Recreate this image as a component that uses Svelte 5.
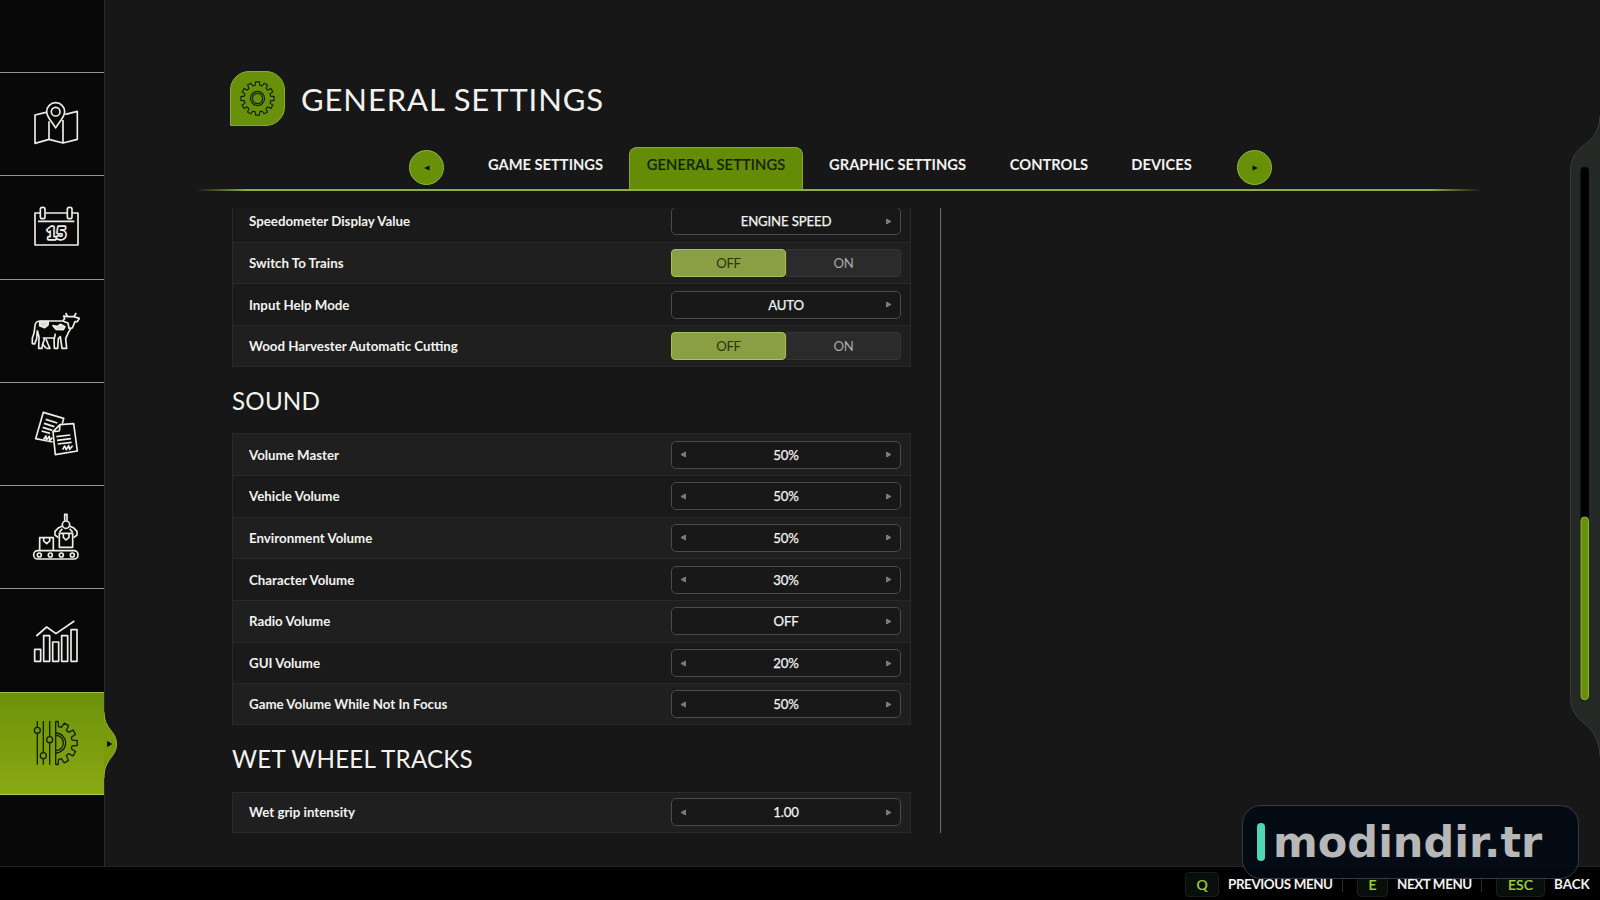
<script>
  const menu = ["map", "calendar", "animals", "contracts", "production", "statistics", "settings"];
  const views = {
    map: "96 120 144 144",
    calendar: "96 430 144 144",
    animals: "96 95 144 144",
    contracts: "96 405 144 144",
    production: "96 100 144 144",
    statistics: "96 409 144 144",
    settings: "96 119 144 144"
  };

  const tabs = [
    { name: "GAME SETTINGS", width: 167 },
    { name: "GENERAL SETTINGS", width: 174, active: true },
    { name: "GRAPHIC SETTINGS", width: 189 },
    { name: "CONTROLS", width: 114 },
    { name: "DEVICES", width: 111 }
  ];

  const sections = [
    {
      rows: [
        { label: "Speedometer Display Value", value: "ENGINE SPEED", first: true },
        { label: "Switch To Trains", toggle: true },
        { label: "Input Help Mode", value: "AUTO", first: true },
        { label: "Wood Harvester Automatic Cutting", toggle: true }
      ]
    },
    {
      title: "SOUND",
      rows: [
        { label: "Volume Master", value: "50%" },
        { label: "Vehicle Volume", value: "50%" },
        { label: "Environment Volume", value: "50%" },
        { label: "Character Volume", value: "30%" },
        { label: "Radio Volume", value: "OFF", first: true },
        { label: "GUI Volume", value: "20%" },
        { label: "Game Volume While Not In Focus", value: "50%" }
      ]
    },
    {
      title: "WET WHEEL TRACKS",
      rows: [{ label: "Wet grip intensity", value: "1.00" }]
    }
  ];

  const keys = [
    { key: "Q", action: "PREVIOUS MENU", keyWidth: 34, width: 115 },
    { key: "E", action: "NEXT MENU", keyWidth: 31, width: 85 },
    { key: "ESC", action: "BACK", keyWidth: 49, width: 38 }
  ];

  // outline of a cog with 12 teeth
  function cog(cx, cy, outer, inner) {
    const steps = [[-10, inner], [-6.5, outer], [6.5, outer], [10, inner]];
    let d = "";
    for (let i = 0; i < 12; i++) {
      for (const [offset, r] of steps) {
        const a = ((i * 30 + offset) * Math.PI) / 180;
        d += (d ? "L" : "M") + (cx + r * Math.sin(a)).toFixed(1) + " " + (cy - r * Math.cos(a)).toFixed(1);
      }
    }
    return d + "Z";
  }
</script>

<div class="screen">
  <div class="main">
    <nav>
      {#each menu as item}
        <div class="item" class:active={item === "settings"}>
          <svg class="icon" viewBox={views[item]}>
            {#if item === "map"}
              <path d="M138 157L105 165V250L147 238L189 249L232 238V154L196 163M147 184V238M189 180V249" />
              <path d="M167 204C160 190 140 172 140 155A27 27 0 0 1 194 155C194 172 174 190 167 204Z" />
              <circle cx="167" cy="155" r="13" />
            {:else if item === "calendar"}
              <path d="M121 460H105V556H234V460H217M136 460H202M114 485H223" />
              <rect x="121" y="443" width="14" height="34" rx="6" />
              <rect x="202" y="443" width="14" height="34" rx="6" />
              <text x="169" y="538" text-anchor="middle">15</text>
            {:else if item === "animals"}
              <path d="M188 137H120Q106 138 105 151L102 174L97 188V205L104 206L110 190L112 165M112 165L117 185L116 219H126L128 206L134 190M128 188H162L163 219H173L175 190L181 184L186 219H200L197 190L205 172L214 157" />
              <path d="M188 137L194 130L191 122L203 124L210 124M203 124L197 113M210 124L221 124L229 113M221 124L238 129L232 139H225L217 158L207 159L204 143L188 137M139 219H150L144 206L138 191M128 206L138 219M166 175L163 190" />
              <path class="solid" d="M119 139H145L144 149L134 157L119 151ZM159 151L172 154L181 147L195 154L190 163L168 162Z" />
            {:else if item === "contracts"}
              <path d="M158 501L107 491L130 412L191 430L187 446M137 433L172 444M132 445L163 455M128 457L157 466M125 468L150 475M131 493L138 483L139 495L148 484L149 497L157 488" />
              <path d="M180 449L221 446L232 528L166 539L159 470ZM180 449L178 468L159 470M169 485L211 480M171 496L213 491M173 507L215 502M188 524L194 513L199 524L206 512L209 523L218 512" />
            {:else if item === "production"}
              <rect x="101" y="213" width="133" height="25" rx="12" />
              <circle cx="118" cy="226" r="6" />
              <circle cx="151" cy="226" r="6" />
              <circle cx="184" cy="226" r="6" />
              <circle cx="217" cy="226" r="6" />
              <path d="M119 212V174H160V212M131 175V184L140 192L149 184V175M178 161H218V203H178ZM190 161V173L198 181L207 173V161M194 123V104H201V123" />
              <circle cx="198" cy="135" r="11" />
              <path d="M188 139L176 144L165 155V166L175 174M208 139L220 144L231 155V166L221 174M187 147L178 158M209 147L218 158" />
            {:else if item === "statistics"}
              <path d="M104 506H122V542H104ZM131 465H149V542H131ZM158 484H176V542H158ZM185 465H203V542H185ZM213 447H231V542H213ZM109 466L140 439L168 459L223 421" />
            {:else}
              <path d="M112 125V144M112 162V256M130 125V220M130 238V256M149 125V172M149 190V256" />
              <circle cx="112" cy="153" r="9" />
              <circle cx="130" cy="229" r="9" />
              <circle cx="149" cy="181" r="9" />
              <clipPath id="half"><rect x="167" y="119" width="80" height="150" /></clipPath>
              <g clip-path="url(#half)">
                <path d={cog(167, 191, 65, 50)} />
                <circle cx="167" cy="191" r="30" />
                <circle cx="167" cy="191" r="23" />
              </g>
              <path d="M167 126V256" />
            {/if}
          </svg>
          {#if item === "settings"}
            <svg class="bump" viewBox="0 0 14 84">
              <path class="fill" d="M0 10C0 28 12.500 28 12.500 42C12.500 56 0 56 0 76Z" />
              <path class="edge" d="M0 10C0 28 12.500 28 12.500 42C12.500 56 0 56 0 76" />
              <path class="arrow" d="M3.500 39.500V44.500L7.500 42Z" />
            </svg>
          {/if}
        </div>
      {/each}
    </nav>

    <div class="page">
      <header>
        <div class="badge">
          <svg viewBox="0 0 54 54">
            <path d={cog(27, 27, 17, 13.6)} />
            <circle cx="27" cy="27" r="7.2" />
            <circle cx="27" cy="27" r="5.2" />
          </svg>
        </div>
        <h1>GENERAL SETTINGS</h1>
      </header>

      <div class="tabs">
        <div class="round"><svg viewBox="0 0 6 6"><path d="M5.500 0.500V5.500L0 3Z" /></svg></div>
        <div class="names">
          {#each tabs as tab}
            <div class="tab" class:active={tab.active} style="width: {tab.width}px">{tab.name}</div>
          {/each}
        </div>
        <div class="round"><svg viewBox="0 0 6 6"><path d="M0.500 0.500V5.500L6 3Z" /></svg></div>
      </div>

      <div class="content">
        <div class="list">
          {#each sections as section}
            {#if section.title}
              <h2>{section.title}</h2>
            {/if}
            <div class="panel" class:cut={!section.title}>
              {#each section.rows as row}
                <div class="row">
                  <span class="label">{row.label}</span>
                  {#if row.toggle}
                    <div class="toggle">
                      <span class="option on">OFF</span>
                      <span class="option">ON</span>
                    </div>
                  {:else}
                    <div class="select">
                      <svg viewBox="0 0 6 7" class:hidden={row.first}><path d="M5.500 1V6L1 3.500Z" /></svg>
                      <span class="value">{row.value}</span>
                      <svg viewBox="0 0 6 7"><path d="M0.500 1V6L5 3.500Z" /></svg>
                    </div>
                  {/if}
                </div>
              {/each}
            </div>
          {/each}
        </div>
      </div>
    </div>

    <div class="scroll">
      <svg viewBox="0 0 30 640">
        <path class="body" d="M30 0C28 34 0.500 24 0.500 56V580C0.500 612 28 602 30 640" />
        <rect x="10.500" y="51" width="8.500" height="534" rx="4" />
        <rect class="thumb" x="11" y="401" width="7.500" height="183" rx="3.700" />
      </svg>
    </div>
  </div>

  <footer>
    {#each keys as k}
      <span class="key" style="width: {k.keyWidth}px">{k.key}</span>
      <span class="action" style="width: {k.width}px">{k.action}</span>
    {/each}
  </footer>

  <div class="watermark"><i></i><b>modindir.tr</b></div>
</div>

<style>
  :global(body) {
    background: #171717;
  }
  .screen {
    position: relative;
    width: 1600px;
    height: 900px;
    overflow: hidden;
    display: flex;
    flex-direction: column;
    box-sizing: border-box;
    background: #171717;
    color: #f2f2f0;
    font-family: Lato, "Open Sans", sans-serif;
  }
  .screen :global(*) {
    box-sizing: border-box;
  }
  .main {
    height: 867px;
    display: flex;
    border-bottom: 1px solid #242424;
  }

  nav {
    width: 105px;
    height: 866px;
    padding-top: 72px;
    background: #080808;
    border-right: 1px solid #292929;
    display: flex;
    flex-direction: column;
  }
  .item {
    position: relative;
    height: 103.3px;
    padding-left: 32px;
    display: flex;
    align-items: center;
    border-top: 1px solid #929490;
  }
  .icon {
    width: 48px;
    height: 48px;
    overflow: visible;
    fill: none;
    stroke: #eeeee8;
    stroke-width: 5;
    stroke-linejoin: round;
  }
  .icon text {
    font: 700 51px Lato, sans-serif;
    fill: #080808;
    stroke-width: 10;
    paint-order: stroke;
  }
  .icon .solid {
    fill: #d8dad2;
  }
  .item.active {
    background: linear-gradient(#6c910b, #7b9d0e 50%, #89a912);
    border-top: 1px solid #9cc23b;
    border-bottom: 1px solid #a9cb4b;
  }
  .active .icon {
    stroke: #122000;
    stroke-width: 4;
  }
  .bump {
    position: absolute;
    left: 104px;
    top: 9px;
    width: 14px;
    height: 84px;
  }
  .bump .fill {
    fill: #789a0d;
  }
  .bump .edge {
    fill: none;
    stroke: #98b93c;
  }
  .bump .arrow {
    stroke: #0b1200;
  }

  .page {
    width: 1465px;
    padding: 71px 0 0 92px;
  }
  header {
    display: flex;
    align-items: center;
    height: 55px;
    padding-left: 33px;
  }
  .badge {
    width: 55px;
    height: 55px;
    background: #689008;
    border: 1px solid #8aae35;
    border-radius: 19px 19px 19px 0;
  }
  .badge svg {
    display: block;
    fill: none;
    stroke: #132400;
    stroke-width: 1.2;
  }
  h1 {
    margin: 0 0 0 16px;
    font-size: 31px;
    font-weight: 400;
    line-height: 56px;
    letter-spacing: 0.9px;
  }

  .tabs {
    display: flex;
    width: 1284px;
    height: 65px;
    padding: 21px 0 0 212px;
    border-bottom: 2px solid;
    border-image: linear-gradient(90deg, transparent, #8fb040 4%, #8fb040 96%, transparent) 1;
  }
  .round {
    width: 35px;
    height: 35px;
    margin-top: 3px;
    border: 1px solid #8fb838;
    border-radius: 50%;
    background: #689008;
    display: flex;
    align-items: center;
    justify-content: center;
  }
  .round svg {
    width: 6px;
    height: 6px;
    fill: #0b1200;
  }
  .names {
    display: flex;
    width: 793px;
    padding-left: 18px;
  }
  .tab {
    height: 42px;
    padding-top: 8px;
    text-align: center;
    font-size: 14.7px;
    font-weight: 700;
    line-height: 18px;
    white-space: nowrap;
  }
  .tab.active {
    background: #658c06;
    border: 1px solid #86ab2c;
    border-bottom: 0;
    border-radius: 8px 8px 0 0;
    color: #142100;
    font-weight: 500;
    padding-top: 7px;
    letter-spacing: 0.1px;
    -webkit-text-stroke: 0.2px;
  }

  .content {
    display: flex;
    height: 625px;
    margin: 17px 0 0 35px;
  }
  .list {
    width: 709px;
    height: 625px;
    overflow: hidden;
    border-right: 1px solid #6d6d6d;
  }
  .panel {
    width: 679px;
    background: #1f1f1f;
  }
  .panel.cut {
    margin-top: -8px;
  }
  .row {
    display: flex;
    align-items: center;
    height: 41.7px;
    padding: 0 9px 0 16px;
    border: 1px solid #292929;
    border-bottom: 0;
  }
  .row:last-child {
    border-bottom: 1px solid #292929;
  }
  .row:nth-child(even) {
    background: #1a1a1a;
  }
  .cut .row:nth-child(odd) {
    background: #1a1a1a;
  }
  .cut .row:nth-child(even) {
    background: #1f1f1f;
  }
  .label {
    flex: 1;
    font-size: 13.3px;
    font-weight: 700;
    white-space: nowrap;
  }
  .select,
  .toggle {
    display: flex;
    align-items: center;
    width: 230px;
    height: 28px;
    border-radius: 5px;
    font-size: 13.2px;
  }
  .select {
    justify-content: space-between;
    padding: 0 8px;
    border: 1px solid #4a4b4a;
    background: #181818;
  }
  .value {
    letter-spacing: -0.15px;
    -webkit-text-stroke: 0.25px;
  }
  .select svg {
    width: 6px;
    height: 7px;
    fill: #777;
    stroke: #a0a0a0;
    stroke-width: 0.6;
  }
  .select svg.hidden {
    visibility: hidden;
  }
  .option {
    width: 115px;
    height: 28px;
    line-height: 27px;
    text-align: center;
    background: #2b2b2b;
    border: 1px solid #353535;
    border-radius: 0 4px 4px 0;
    color: #aaa;
    letter-spacing: -0.4px;
  }
  .option.on {
    background: #8a9e43;
    border-color: #a8c25a;
    border-radius: 4px;
    color: #2b3510;
  }
  h2 {
    margin: 0;
    height: 66.5px;
    line-height: 67px;
    font-size: 24.2px;
    font-weight: 400;
    letter-spacing: 0.2px;
  }

  .scroll {
    width: 30px;
    padding-top: 116px;
  }
  .scroll svg {
    width: 30px;
    height: 640px;
  }
  .body {
    fill: #252925;
    stroke: #3a3e3a;
  }
  .scroll .thumb {
    fill: #688f0b;
    stroke: #8fb52b;
  }

  footer {
    height: 33px;
    display: flex;
    align-items: center;
    padding: 1px 0 0 1185px;
    background: #000;
    font-size: 13.4px;
    font-weight: 700;
    white-space: nowrap;
  }
  footer span {
    flex-shrink: 0;
  }
  .key {
    height: 25px;
    line-height: 23px;
    text-align: center;
    border: 1px solid #191f19;
    border-radius: 4px;
    background: #0a0e0a;
    color: #9ed336;
    font-weight: 500;
    font-size: 14px;
    -webkit-text-stroke: 0.2px;
  }
  .action {
    margin: 0 14px 0 9px;
    line-height: 16px;
    border-right: 1px solid #2c2c2c;
    letter-spacing: -0.4px;
  }
  .action:last-child {
    margin-right: 0;
    border: 0;
    letter-spacing: 0;
  }

  .watermark {
    position: absolute;
    left: 1242px;
    top: 805px;
    width: 337px;
    height: 74px;
    padding-left: 14px;
    display: flex;
    align-items: center;
    background: rgba(3, 10, 20, 0.88);
    border: 1px solid #343a3f;
    border-radius: 19px;
  }
  .watermark i {
    width: 8px;
    height: 38px;
    border-radius: 4px;
    background: #4fd6b5;
  }
  .watermark b {
    margin-left: 8px;
    font: 700 43px "DejaVu Sans", sans-serif;
    color: #b7b7b7;
  }
</style>
